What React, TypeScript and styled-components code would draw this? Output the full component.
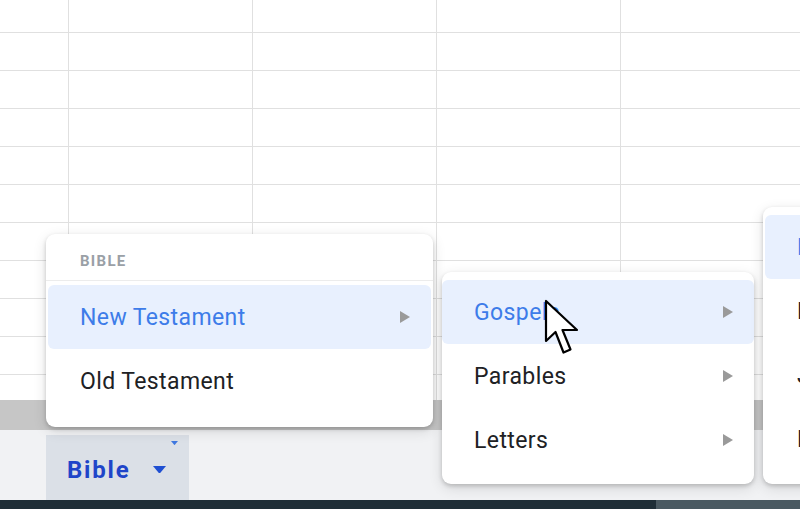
import React from 'react';
import styled, {createGlobalStyle} from 'styled-components';

const GlobalStyle = createGlobalStyle`
  html, body {
    margin: 0;
    padding: 0;
    background: #ffffff;
  }
  body {
    font-family: Roboto, "Liberation Sans", sans-serif;
  }
`;

const COLUMNS = 5;
const ROWS = 11;

type Entry = {label: string; sub?: boolean; active?: boolean};

const testaments: Entry[] = [
    {label: 'New Testament', sub: true, active: true},
    {label: 'Old Testament'},
];

const sections: Entry[] = [
    {label: 'Gospels', sub: true, active: true},
    {label: 'Parables', sub: true},
    {label: 'Letters', sub: true},
];

const books: Entry[] = [
    {label: 'Matthew', active: true},
    {label: 'Mark'},
    {label: 'John'},
    {label: 'Luke'},
];

const Arrow = () => (
    <svg width="12" height="14" viewBox="0 0 12 14">
        <path d="M1 1 L11 7 L1 13 Z" fill="#9a9a9a"/>
    </svg>
);

const Caret = ({size}: {size: number}) => (
    <svg width={size} height={size * 0.6} viewBox="0 0 10 6">
        <path d="M0 0 L10 0 L5 6 Z" fill="currentColor"/>
    </svg>
);

const MenuList = ({items, rowHeight}: {items: Entry[]; rowHeight: number}) => (
    <>
        {items.map(item => (
            <Item key={item.label} $active={item.active} $height={rowHeight}>
                <span>{item.label}</span>
                {item.sub && <Arrow/>}
            </Item>
        ))}
    </>
);

const App = () => {
    return (
        <Page>
            <GlobalStyle/>
            <Sheet>
                {Array.from({length: ROWS * COLUMNS}).map((_, i) => (
                    <Cell key={i}/>
                ))}
            </Sheet>
            <ScrollTrack/>
            <TabBar>
                <Tab>
                    <span>Bible</span>
                    <TabCaret><Caret size={13}/></TabCaret>
                    <Corner><Caret size={7}/></Corner>
                </Tab>
            </TabBar>
            <Dock>
                <DockPart $tone="#1f2e37"/>
                <DockPart $tone="#4a5961" $grow/>
            </Dock>

            <Menu $left={46} $top={234} $width={387} $pad="0 2px 14px">
                <Header>BIBLE</Header>
                <Divider/>
                <MenuList items={testaments} rowHeight={64}/>
            </Menu>
            <Menu $left={442} $top={272} $width={312} $pad="8px 0 12px">
                <MenuList items={sections} rowHeight={64}/>
            </Menu>
            <Menu $left={763} $top={207} $width={220} $pad="8px 0 13px 2px">
                <MenuList items={books} rowHeight={64}/>
            </Menu>

            <Pointer width="40" height="60" viewBox="0 0 40 60">
                <path
                    d="M2 2 L2 42 L11.5 33 L19.5 53.5 L26.5 50.5 L18.5 31 L33 31 Z"
                    fill="#ffffff"
                    stroke="#000000"
                    strokeWidth="2.2"
                    strokeLinejoin="round"
                />
            </Pointer>
        </Page>
    );
};

const Page = styled.div`
  position: relative;
  display: flex;
  flex-direction: column;
  width: 800px;
  height: 509px;
  overflow: hidden;
  background: #ffffff;
`;

const Sheet = styled.div`
  display: grid;
  grid-template-columns: 68px repeat(4, 183px);
  grid-template-rows: 32px;
  grid-auto-rows: 37px;
  gap: 1px;
  height: 400px;
  overflow: hidden;
  background: #e0e0e0;
`;

const Cell = styled.div`
  background: #ffffff;
`;

const ScrollTrack = styled.div`
  height: 30px;
  background: #c6c6c6;
`;

const TabBar = styled.div`
  display: flex;
  align-items: flex-end;
  height: 70px;
  padding-left: 46px;
  background: #f1f2f4;
`;

const Tab = styled.div`
  position: relative;
  display: flex;
  align-items: center;
  gap: 23px;
  width: 143px;
  height: 65px;
  box-sizing: border-box;
  padding: 4px 0 0 21px;
  background: #dbe0e7;
  color: #1f45c9;
  font-size: 24px;
  font-weight: 700;
  letter-spacing: 1.8px;
`;

const TabCaret = styled.span`
  display: flex;
  color: #1f4fd2;
`;

const Corner = styled.span`
  position: absolute;
  top: 6px;
  right: 11px;
  display: flex;
  color: #3f78e0;
`;

const Dock = styled.div`
  display: flex;
  height: 9px;
`;

const DockPart = styled.div<{$tone: string; $grow?: boolean}>`
  width: 656px;
  flex: ${({$grow}) => ($grow ? 1 : 'none')};
  background: ${({$tone}) => $tone};
`;

const Menu = styled.div<{$left: number; $top: number; $width: number; $pad: string}>`
  position: absolute;
  left: ${({$left}) => $left}px;
  top: ${({$top}) => $top}px;
  width: ${({$width}) => $width}px;
  box-sizing: border-box;
  padding: ${({$pad}) => $pad};
  background: #ffffff;
  border-radius: 9px;
  box-shadow: 0 2px 4px rgba(0, 0, 0, 0.18), 0 4px 14px rgba(0, 0, 0, 0.12);
`;

const Header = styled.div`
  height: 46px;
  box-sizing: border-box;
  padding: 18px 0 0 32px;
  color: #9aa0a6;
  font-size: 15px;
  font-weight: 700;
  letter-spacing: 1.3px;
`;

const Divider = styled.div`
  height: 1px;
  margin: 0 -2px 4px;
  background: #ececec;
`;

const Item = styled.div<{$active?: boolean; $height: number}>`
  display: flex;
  align-items: center;
  justify-content: space-between;
  height: ${({$height}) => $height}px;
  padding: 0 20px 0 32px;
  border-radius: 6px;
  background: ${({$active}) => ($active ? '#e8f0fe' : 'transparent')};
  color: ${({$active}) => ($active ? '#3d7ce9' : '#202124')};
  font-size: 23px;
  letter-spacing: 0.4px;
  white-space: nowrap;
`;

const Pointer = styled.svg`
  position: absolute;
  left: 544px;
  top: 299px;
`;

export default App;
